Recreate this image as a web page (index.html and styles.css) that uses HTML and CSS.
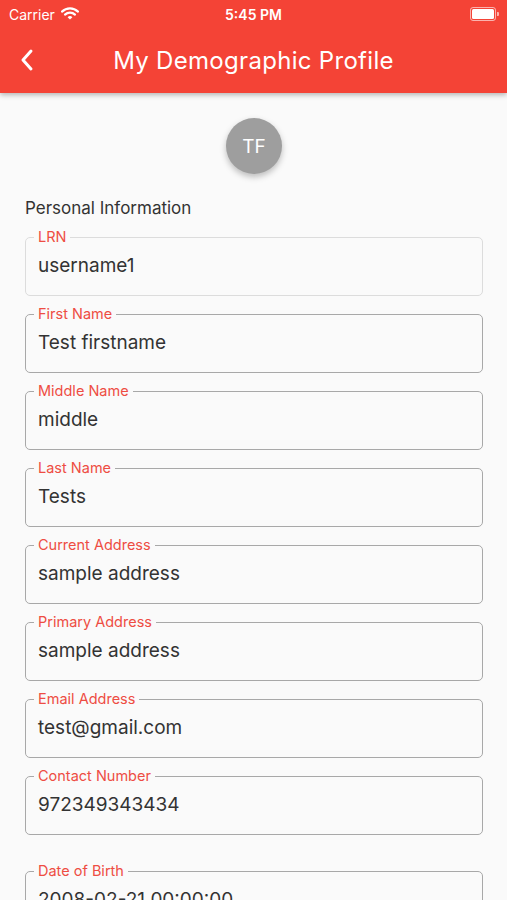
FILE: index.html
```html
<!DOCTYPE html>
<html lang="en">
<head>
    <meta charset="UTF-8">
    <meta name="viewport" content="width=device-width, initial-scale=1.0">
    <title>My Demographic Profile</title>
    <link rel="stylesheet" href="styles.css">
</head>
<body>
    <div class="header">
        <div class="statusbar">
            <div class="carrier">Carrier
                <svg class="wifi" width="18" height="13" viewBox="0 0 18 13">
                    <path d="M1 4.6 A11.5 11.5 0 0 1 17 4.6" fill="none" stroke="#fff" stroke-width="2.2" stroke-linecap="round"/>
                    <path d="M4 7.6 A7.2 7.2 0 0 1 14 7.6" fill="none" stroke="#fff" stroke-width="2.2" stroke-linecap="round"/>
                    <path d="M9 12.4 L6.6 10.2 A3.4 3.4 0 0 1 11.4 10.2 Z" fill="#fff"/>
                </svg>
            </div>
            <div class="clock">5:45 PM</div>
            <div class="battery">
                <span class="battery-body"><span class="battery-level"></span></span>
                <span class="battery-nub"></span>
            </div>
        </div>
        <div class="appbar">
            <svg class="back" width="16" height="24" viewBox="0 0 16 24">
                <path d="M12 3 L4 12 L12 21" fill="none" stroke="#fff" stroke-width="3" stroke-linecap="round" stroke-linejoin="round"/>
            </svg>
            <h1>My Demographic Profile</h1>
        </div>
    </div>

    <div class="content">
        <div class="avatar">TF</div>
        <h2>Personal Information</h2>

        <form class="fields">
            <fieldset class="field disabled">
                <legend>LRN</legend>
                <div class="value">username1</div>
            </fieldset>
            <fieldset class="field">
                <legend>First Name</legend>
                <div class="value">Test firstname</div>
            </fieldset>
            <fieldset class="field">
                <legend>Middle Name</legend>
                <div class="value">middle</div>
            </fieldset>
            <fieldset class="field">
                <legend>Last Name</legend>
                <div class="value">Tests</div>
            </fieldset>
            <fieldset class="field">
                <legend>Current Address</legend>
                <div class="value">sample address</div>
            </fieldset>
            <fieldset class="field">
                <legend>Primary Address</legend>
                <div class="value">sample address</div>
            </fieldset>
            <fieldset class="field">
                <legend>Email Address</legend>
                <div class="value">test@gmail.com</div>
            </fieldset>
            <fieldset class="field">
                <legend>Contact Number</legend>
                <div class="value">972349343434</div>
            </fieldset>
            <fieldset class="field spaced">
                <legend>Date of Birth</legend>
                <div class="value">2008-02-21 00:00:00</div>
            </fieldset>
        </form>
    </div>
</body>
</html>
```

FILE: styles.css
```css
body { margin: 0; background-color: #fafafa; font-family: Inter, "Noto Sans", sans-serif; color: #333; }

.header { background-color: #f44336; color: white; box-shadow: 0px 2px 5px rgba(0, 0, 0, 0.28); position: relative; z-index: 1; }
.statusbar { height: 28px; display: flex; align-items: center; justify-content: space-between; padding: 0 8px 0 9px; font-size: 14px; position: relative; }
.carrier { display: flex; align-items: center; gap: 6px; }
.wifi { margin-top: -2px; }
.clock { position: absolute; left: 0; right: 0; text-align: center; font-weight: 600; pointer-events: none; }
.battery { display: flex; align-items: center; gap: 1px; }
.battery-body { width: 22px; height: 10px; border: 1px solid rgba(255, 255, 255, 0.6); border-radius: 3px; padding: 1px; display: flex; }
.battery-level { flex: 1; background: white; border-radius: 1.5px; }
.battery-nub { width: 2px; height: 4px; background: rgba(255, 255, 255, 0.6); border-radius: 0 1px 1px 0; }

.appbar { height: 65px; display: flex; align-items: center; justify-content: center; position: relative; }
.back { position: absolute; left: 19px; top: 20px; }
.appbar h1 { margin: 0; font-size: 24px; font-weight: 400; letter-spacing: 0.3px; }

.content { padding: 25px 24px 0 25px; }
.avatar { width: 56px; height: 56px; border-radius: 50%; background: #9e9e9e; color: white; margin: 0 auto; display: flex; align-items: center; justify-content: center; font-size: 19px; box-shadow: 0px 3px 6px rgba(0, 0, 0, 0.25); }
h2 { margin: 24px 0 0 0; font-size: 17px; font-weight: 400; color: #333; }

.fields { display: flex; flex-direction: column; gap: 10px; margin-top: 11px; }
.field { margin: 0; border: 1px solid #a8a8a8; border-radius: 5px; padding: 0 12px; height: 67px; box-sizing: border-box; }
.field.disabled { border-color: #dcdcdc; }
.field.spaced { margin-top: 18px; }
.field legend { color: #ee4d43; font-size: 14.5px; padding: 0 4px; margin-left: -4px; line-height: 16px; }
.value { font-size: 19px; line-height: 24px; padding-top: 9px; color: #333; }
```
